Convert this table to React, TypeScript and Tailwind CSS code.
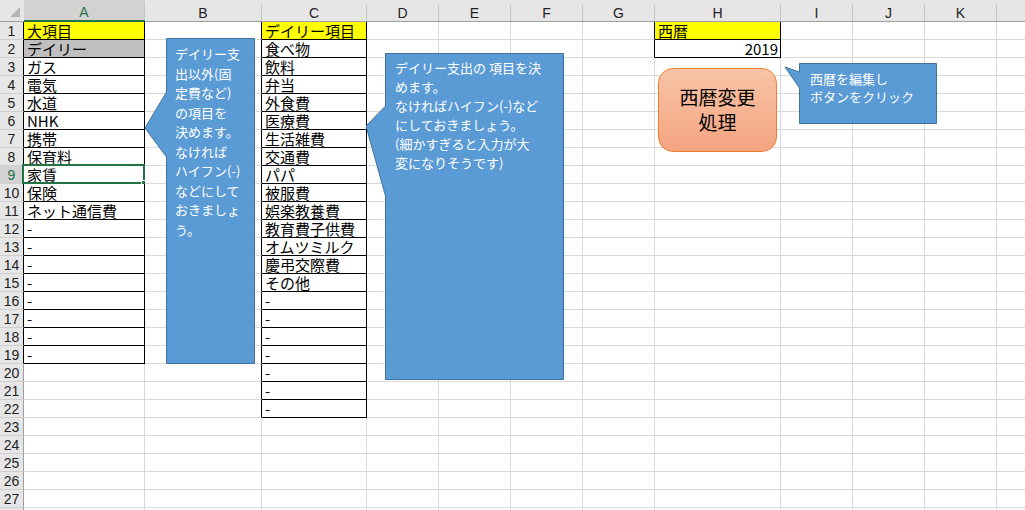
import type { ReactNode } from 'react';

const colWidths = [121, 117, 105, 72, 72, 72, 72, 126, 72, 72, 72];
const letters = ['A', 'B', 'C', 'D', 'E', 'F', 'G', 'H', 'I', 'J', 'K', ''];
const rowCount = 28;

const dash = Array.from({ length: 8 }, () => '-');
const colA = ['大項目', 'デイリー', 'ガス', '電気', '水道', 'NHK', '携帯', '保育料', '家賃', '保険', 'ネット通信費', ...dash];
const colC = [
  'デイリー項目', '食べ物', '飲料', '弁当', '外食費', '医療費', '生活雑費', '交通費', 'パパ', '被服費',
  '娯楽教養費', '教育費子供費', 'オムツミルク', '慶弔交際費', 'その他', '-', '-', '-', '-', '-', '-', '-',
];

// bordered blocks: column index (1 = A), first row, last row
const blocks = [
  { c: 1, r1: 1, r2: 19 },
  { c: 3, r1: 1, r2: 22 },
  { c: 8, r1: 1, r2: 2 },
];

const inBlock = (c: number, r: number) => blocks.some((b) => b.c === c && r >= b.r1 && r <= b.r2);

function cellText(c: number, r: number): string {
  if (c === 1) return colA[r - 1] ?? '';
  if (c === 3) return colC[r - 1] ?? '';
  if (c === 8 && r === 1) return '西暦';
  if (c === 8 && r === 2) return '2019';
  return '';
}

function Cell({ c, r }: { c: number; r: number }) {
  const rightBlack = inBlock(c, r) || inBlock(c + 1, r);
  const bottomBlack = inBlock(c, r) || inBlock(c, r + 1);
  const yellow = r === 1 && (c === 1 || c === 3 || c === 8);
  const gray = r === 2 && c === 1;
  const text = cellText(c, r);
  const selected = c === 1 && r === 9;
  return (
    <div
      className={`relative flex h-[18px] items-end border-r border-b ${
        rightBlack ? 'border-r-black' : 'border-r-[#d9d9d9]'
      } ${bottomBlack ? 'border-b-black' : 'border-b-[#d9d9d9]'} ${
        yellow ? 'bg-[#ffff00]' : gray ? 'bg-[#bfbfbf]' : 'bg-white'
      } ${c === 8 && r === 2 ? 'justify-end pr-[2px]' : 'pl-[3px]'}`}
    >
      {text && <span className="block h-[17px] whitespace-nowrap text-[15px] leading-[17px] text-black">{text}</span>}
      {selected && (
        <div className="absolute -top-[2px] -left-[2px] -right-[1px] -bottom-[1px] border-2 border-[#217346]">
          <div className="absolute -right-[4px] -bottom-[4px] h-[6px] w-[6px] border border-white bg-[#217346]" />
        </div>
      )}
    </div>
  );
}

function Callout({
  pos,
  w,
  h,
  x,
  y,
  tail,
  children,
}: {
  pos: string;
  w: number;
  h: number;
  x: number;
  y: number;
  tail: [number, number, number, number, number, number];
  children: ReactNode;
}) {
  const [ux, uy, tx, ty, lx, ly] = tail;
  const d = `M0.5,0.5 H${w - 0.5} V${h - 0.5} H0.5 V${ly - y} L${tx - x},${ty - y} L${ux - x + 0.5},${uy - y} Z`;
  return (
    <div className={`absolute ${pos}`}>
      <svg className="absolute top-0 left-0 overflow-visible" width={w} height={h}>
        <path d={d} fill="#5b9bd5" stroke="#41719c" strokeWidth={1} />
      </svg>
      <div className="relative text-[13px] leading-[19.5px] whitespace-nowrap text-white">{children}</div>
    </div>
  );
}

function Row({ r }: { r: number }) {
  const sel = r === 9;
  return (
    <>
      <div
        className={`flex h-[18px] items-center justify-center border-r border-b border-b-[#cfcfcf] font-['Liberation_Sans',sans-serif] text-[14px] leading-[16px] ${
          inBlock(1, r) ? 'border-r-black' : 'border-r-[#9e9e9e]'
        } ${sel ? 'bg-[#d2d2d2] text-[#217346]' : 'bg-[#e6e6e6] text-[#222]'}`}
      >
        {r < rowCount ? r : ''}
      </div>
      {colWidths.map((_, i) => (
        <Cell key={i} c={i + 1} r={r} />
      ))}
      <div className="h-[18px] border-b border-b-[#d9d9d9] bg-white" />
    </>
  );
}

export default function App() {
  return (
    <div className="relative h-[510px] w-[1025px] overflow-hidden bg-white font-['Noto_Sans_CJK_JP',sans-serif]">
      <div className="grid grid-cols-[24px_121px_117px_105px_72px_72px_72px_72px_126px_72px_72px_72px_72px]">
        {/* column headers */}
        <div className="relative h-[22px] border-b border-b-[#9e9e9e] bg-[#e6e6e6]">
          <svg className="absolute top-[7px] left-[10px]" width="11" height="11">
            <polygon points="0,10 10,10 10,0" fill="#b4b4b4" />
          </svg>
        </div>
        {letters.map((l, i) => (
          <div
            key={i}
            className={`h-[22px] pt-[5px] font-['Liberation_Sans',sans-serif] ${
              i === 0
                ? 'border-b-2 border-b-[#217346] bg-[#d2d2d2] text-[#217346]'
                : 'border-b border-b-[#9e9e9e] bg-[#e6e6e6] text-[#222]'
            }`}
          >
            <div
              className={`flex items-center justify-center border-r border-r-[#c4c4c4] text-[14px] leading-[15px] ${
                i === 0 ? 'h-[15px]' : 'h-[16px]'
              }`}
            >
              {l}
            </div>
          </div>
        ))}
        {Array.from({ length: rowCount }, (_, k) => k + 1).map((r) => (
          <Row key={r} r={r} />
        ))}
      </div>

      <Callout pos="left-[166px] top-[38px] w-[89px] h-[326px] pl-[9px] pt-[6px]" w={89} h={326} x={166} y={38} tail={[166, 92, 145, 128, 166, 157]}>
        <div>デイリー支</div>
        <div>出以外(固</div>
        <div>定費など)</div>
        <div>の項目を</div>
        <div>決めます。</div>
        <div>なければ</div>
        <div>ハイフン(-)</div>
        <div>などにして</div>
        <div>おきましょ</div>
        <div>う。</div>
      </Callout>

      <Callout pos="left-[385px] top-[53px] w-[179px] h-[327px] pl-[10px] pt-[5px]" w={179} h={327} x={385} y={53} tail={[385, 106, 366, 126, 385, 196]}>
        <div className="leading-[19px]">デイリー支出の 項目を決</div>
        <div className="leading-[19px]">めます。</div>
        <div className="leading-[19px]">なければハイフン(-)など</div>
        <div className="leading-[19px]">にしておきましょう。</div>
        <div className="leading-[19px]">(細かすぎると入力が大</div>
        <div className="leading-[19px]">変になりそうです)</div>
      </Callout>

      <Callout pos="left-[799px] top-[63px] w-[138px] h-[61px] pl-[11px] pt-[7px]" w={138} h={61} x={799} y={63} tail={[799, 72, 785, 67, 799, 88]}>
        <div className="leading-[18px]">西暦を編集し</div>
        <div className="leading-[18px]">ボタンをクリック</div>
      </Callout>

      <div className="absolute top-[68px] left-[658px] flex h-[84px] w-[119px] flex-col items-center justify-center rounded-[15px] border border-[#ed7d31] bg-linear-to-b from-[#f7c3a6] to-[#f4a480] pb-[2px] text-[19px] leading-[25px] text-black">
        <div>西暦変更</div>
        <div>処理</div>
      </div>
    </div>
  );
}
